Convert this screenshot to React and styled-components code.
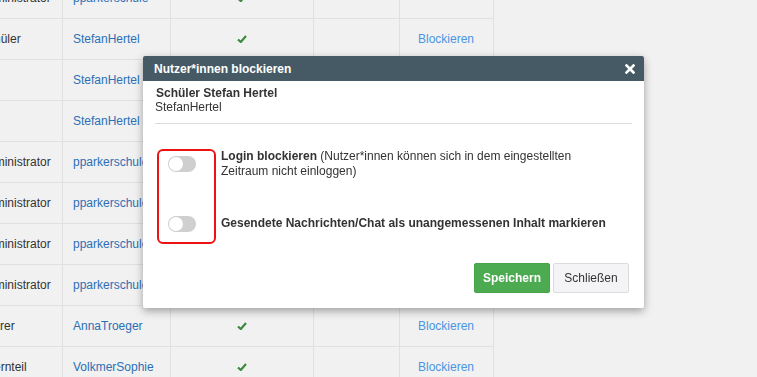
import styled, { createGlobalStyle } from 'styled-components'

const GlobalStyle = createGlobalStyle`
  html, body { margin: 0; padding: 0; }
  body {
    background: #f1f1f1;
    font-family: "Liberation Sans", Arial, sans-serif;
    font-size: 12px;
    color: #333;
    overflow: hidden;
    width: 757px;
    height: 377px;
  }
`

const rows = [
  { role: 'Administrator', user: 'pparkerschule', ok: true, block: false },
  { role: 'Schüler', user: 'StefanHertel', ok: true, block: true },
  { role: '', user: 'StefanHertel', ok: false, block: false },
  { role: '', user: 'StefanHertel', ok: false, block: false },
  { role: 'Administrator', user: 'pparkerschule', ok: false, block: false },
  { role: 'Administrator', user: 'pparkerschule', ok: false, block: false },
  { role: 'Administrator', user: 'pparkerschule', ok: false, block: false },
  { role: 'Administrator', user: 'pparkerschule', ok: false, block: false },
  { role: 'Lehrer', user: 'AnnaTroeger', ok: true, block: true },
  { role: 'Elternteil', user: 'VolkmerSophie', ok: true, block: true },
]

const Table = styled.div`
  margin: -22px 0 0 -30px;
  width: 523px;
  border-right: 1px solid #e0e0e0;
`

const Row = styled.div`
  display: grid;
  grid-template-columns: 92px 108px 143px 86px 93px;
  height: 41px;
  border-bottom: 1px solid #e0e0e0;
  box-sizing: border-box;
`

const Cell = styled.div`
  display: flex;
  align-items: center;
  justify-content: ${p => (p.$center ? 'center' : 'flex-start')};
  padding: 0 10px;
  border-left: ${p => (p.$first ? 'none' : '1px solid #e0e0e0')};
  white-space: nowrap;
  overflow: hidden;
  color: ${p => p.$color || '#333'};
`

const Check = () => (
  <svg width="10" height="8" viewBox="0 0 10 8">
    <path d="M1 4.5 L3.8 7 L9 1" fill="none" stroke="#3b8a3e" strokeWidth="2.2" />
  </svg>
)

const Modal = styled.div`
  position: fixed;
  left: 143px;
  top: 56px;
  width: 501px;
  background: #fff;
  box-shadow: 0 3px 9px rgba(0, 0, 0, 0.35);
  border-radius: 2px;
`

const Header = styled.div`
  height: 25px;
  background: #465a65;
  color: #fff;
  display: flex;
  align-items: center;
  justify-content: space-between;
  padding: 0 9px 0 11px;
  font-weight: bold;
  border-radius: 2px 2px 0 0;
`

const Body = styled.div`
  padding: 5px 12px 15px 12px;
`

const Name = styled.div`
  font-weight: bold;
  line-height: 14px;
  padding-left: 1px;
`

const Login = styled.div`
  line-height: 14px;
`

const Divider = styled.hr`
  border: none;
  border-top: 1px solid #ddd;
  margin: 9px 0 0;
`

const Options = styled.div`
  display: flex;
  margin-top: 25px;
`

const ToggleBox = styled.div`
  width: 59px;
  height: 95px;
  box-sizing: border-box;
  margin-left: 2px;
  border: 2px solid #ee1111;
  border-radius: 6px;
  padding: 5px 0 0 9px;
  display: flex;
  flex-direction: column;
  gap: 44px;
`

const Toggle = styled.div`
  width: 28px;
  height: 16px;
  border-radius: 8px;
  background: #cfcfcf;
  position: relative;
  &::after {
    content: '';
    position: absolute;
    left: 1px;
    top: 1px;
    width: 14px;
    height: 14px;
    border-radius: 50%;
    background: #fff;
  }
`

const Labels = styled.div`
  margin-left: 5px;
  width: 392px;
  display: flex;
  flex-direction: column;
  gap: 37px;
  line-height: 15px;
`

const Label = styled.div`
  b { font-weight: bold; }
`

const Actions = styled.div`
  display: flex;
  justify-content: flex-end;
  gap: 3px;
  margin-top: 19px;
  padding-right: 3px;
`

const Button = styled.button`
  width: 76px;
  height: 30px;
  font-family: inherit;
  font-size: 12px;
  border-radius: 2px;
  border: 1px solid ${p => (p.$primary ? '#47a447' : '#dcdcdc')};
  background: ${p => (p.$primary ? '#4caa50' : '#f4f4f6')};
  color: ${p => (p.$primary ? '#fff' : '#333')};
  font-weight: ${p => (p.$primary ? 'bold' : 'normal')};
`

export default function App() {
  return (
    <>
      <GlobalStyle />
      <Table>
        {rows.map((r, i) => (
          <Row key={i}>
            <Cell $first>{r.role}</Cell>
            <Cell $color="#2c6fb5">{r.user}</Cell>
            <Cell $center>{r.ok && <Check />}</Cell>
            <Cell />
            <Cell $center $color="#4a95e3">{r.block ? 'Blockieren' : ''}</Cell>
          </Row>
        ))}
      </Table>
      <Modal>
        <Header>
          <span>Nutzer*innen blockieren</span>
          <svg width="10" height="10" viewBox="0 0 10 10">
            <path d="M1.5 1.5 L8.5 8.5 M8.5 1.5 L1.5 8.5" stroke="#fff" strokeWidth="2.6" strokeLinecap="square" />
          </svg>
        </Header>
        <Body>
          <Name>Schüler Stefan Hertel</Name>
          <Login>StefanHertel</Login>
          <Divider />
          <Options>
            <ToggleBox>
              <Toggle />
              <Toggle />
            </ToggleBox>
            <Labels>
              <Label><b>Login blockieren</b> (Nutzer*innen können sich in dem eingestellten Zeitraum nicht einloggen)</Label>
              <Label><b>Gesendete Nachrichten/Chat als unangemessenen Inhalt markieren</b></Label>
            </Labels>
          </Options>
          <Actions>
            <Button $primary>Speichern</Button>
            <Button>Schließen</Button>
          </Actions>
        </Body>
      </Modal>
    </>
  )
}
